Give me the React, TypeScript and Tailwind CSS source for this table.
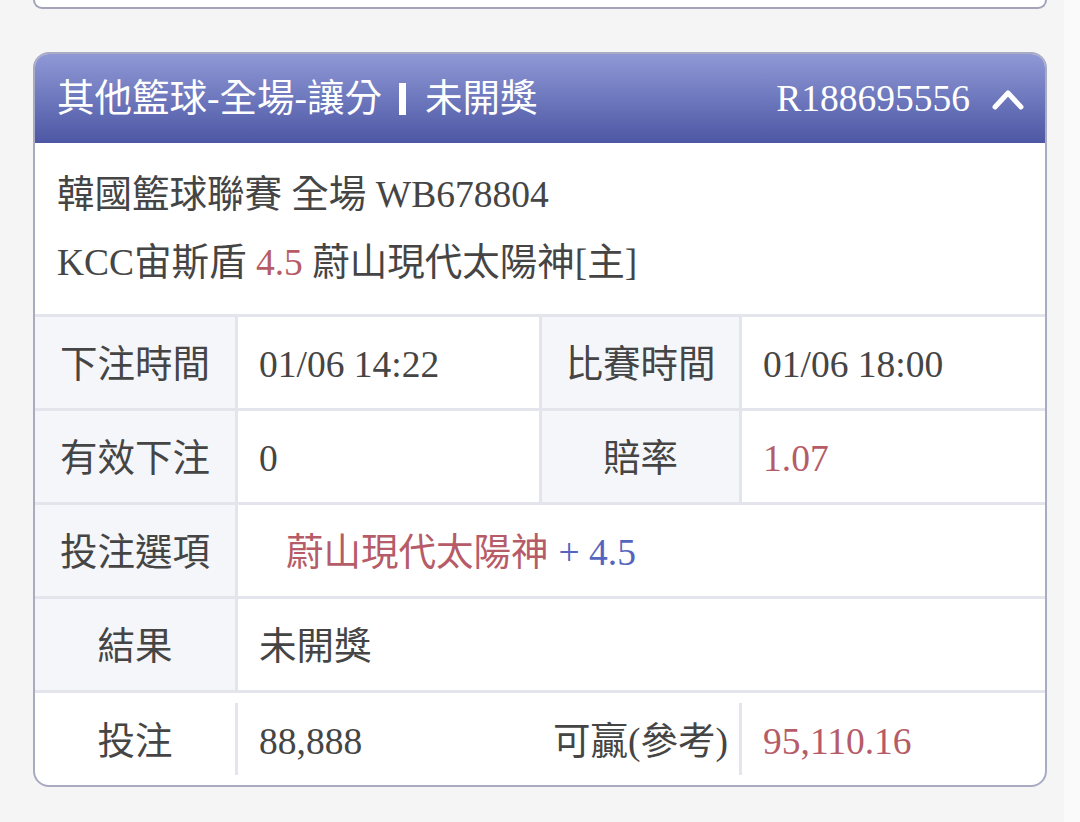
const font = "font-['Liberation_Serif','Noto_Sans_CJK_TC',serif]";

function ChevronUp() {
  return (
    <svg width="32" height="22" viewBox="0 0 32 22" fill="none">
      <polyline points="3,19 16,5 29,19" stroke="white" strokeWidth="5" strokeLinecap="round" strokeLinejoin="round" />
    </svg>
  );
}

function Label({ children, className = "" }: { children: React.ReactNode; className?: string }) {
  return <div className={`flex items-center justify-center bg-[#f5f6fa] pt-[5px] text-[#454545] ${className}`}>{children}</div>;
}

function Value({ children, className = "" }: { children: React.ReactNode; className?: string }) {
  return <div className={`flex items-center pl-[21px] pt-[5px] text-[#454545] ${className}`}>{children}</div>;
}

export default function App() {
  return (
    <div className={`flex min-h-[822px] bg-[#f5f5f6] text-[37.5px] leading-none ${font}`}>
      <div className="w-[1064px] pl-[33px] pr-[17px]">
        {/* bottom edge of the previous card */}
        <div className="h-[9px] rounded-b-2xl border-x-2 border-b-2 border-[#a3a4b8] bg-white" />

        <div className="mt-[43px] overflow-hidden rounded-2xl border-2 border-[#a9abc3] bg-white">
          <header className="flex h-[89px] items-center justify-between bg-gradient-to-b from-[#9099d6] to-[#4d57a4] pl-[22px] pr-[21px] text-white">
            <div className="flex items-center">
              <span>其他籃球-全場-讓分</span>
              <span className="ml-[17px] mr-[19px] inline-block h-[32px] w-[7px] bg-white" />
              <span>未開獎</span>
            </div>
            <div className="flex items-center gap-[22px]">
              <span>R188695556</span>
              <ChevronUp />
            </div>
          </header>

          <div className="flex h-[174px] flex-col justify-center gap-[30px] border-b-[3px] border-[#e3e4ec] pl-[22px] text-[#454545]">
            <div>韓國籃球聯賽 全場 WB678804</div>
            <div>
              KCC宙斯盾 <span className="text-[#b65c68]">4.5</span> 蔚山現代太陽神[主]
            </div>
          </div>

          <div className="grid h-[94px] grid-cols-[203px_304px_200px_1fr] border-b-[3px] border-[#e3e4ec]">
            <Label className="border-r-[3px] border-[#e3e4ec]">下注時間</Label>
            <Value className="border-r-[3px] border-[#e3e4ec]">01/06 14:22</Value>
            <Label className="border-r-[3px] border-[#e3e4ec]">比賽時間</Label>
            <Value>01/06 18:00</Value>
          </div>

          <div className="grid h-[94px] grid-cols-[203px_304px_200px_1fr] border-b-[3px] border-[#e3e4ec]">
            <Label className="border-r-[3px] border-[#e3e4ec]">有效下注</Label>
            <Value className="border-r-[3px] border-[#e3e4ec]">0</Value>
            <Label className="border-r-[3px] border-[#e3e4ec]">賠率</Label>
            <Value className="text-[#b65c68]">1.07</Value>
          </div>

          <div className="grid h-[94px] grid-cols-[203px_1fr] border-b-[3px] border-[#e3e4ec]">
            <Label className="border-r-[3px] border-[#e3e4ec]">投注選項</Label>
            <Value className="pl-[48px]">
              <span className="text-[#b65c68]">蔚山現代太陽神</span>
              <span className="ml-[10px] text-[#5565bd]">+ 4.5</span>
            </Value>
          </div>

          <div className="grid h-[94px] grid-cols-[203px_1fr] border-b-[3px] border-[#e3e4ec]">
            <Label className="border-r-[3px] border-[#e3e4ec]">結果</Label>
            <Value>未開獎</Value>
          </div>

          <div className="grid h-[92px] grid-cols-[203px_304px_200px_1fr] items-center">
            <div className="flex h-[72px] items-center justify-center border-r-[3px] border-[#e3e4ec] pt-[5px] text-[#454545]">投注</div>
            <Value className="h-[72px]">88,888</Value>
            <div className="flex h-[72px] items-center justify-center border-r-[3px] border-[#e3e4ec] pt-[5px] text-[#454545]">可贏(參考)</div>
            <Value className="h-[72px] text-[#b65c68]">95,110.16</Value>
          </div>
        </div>
      </div>
      <div className="w-[16px] bg-[#fafafa]" />
    </div>
  );
}
